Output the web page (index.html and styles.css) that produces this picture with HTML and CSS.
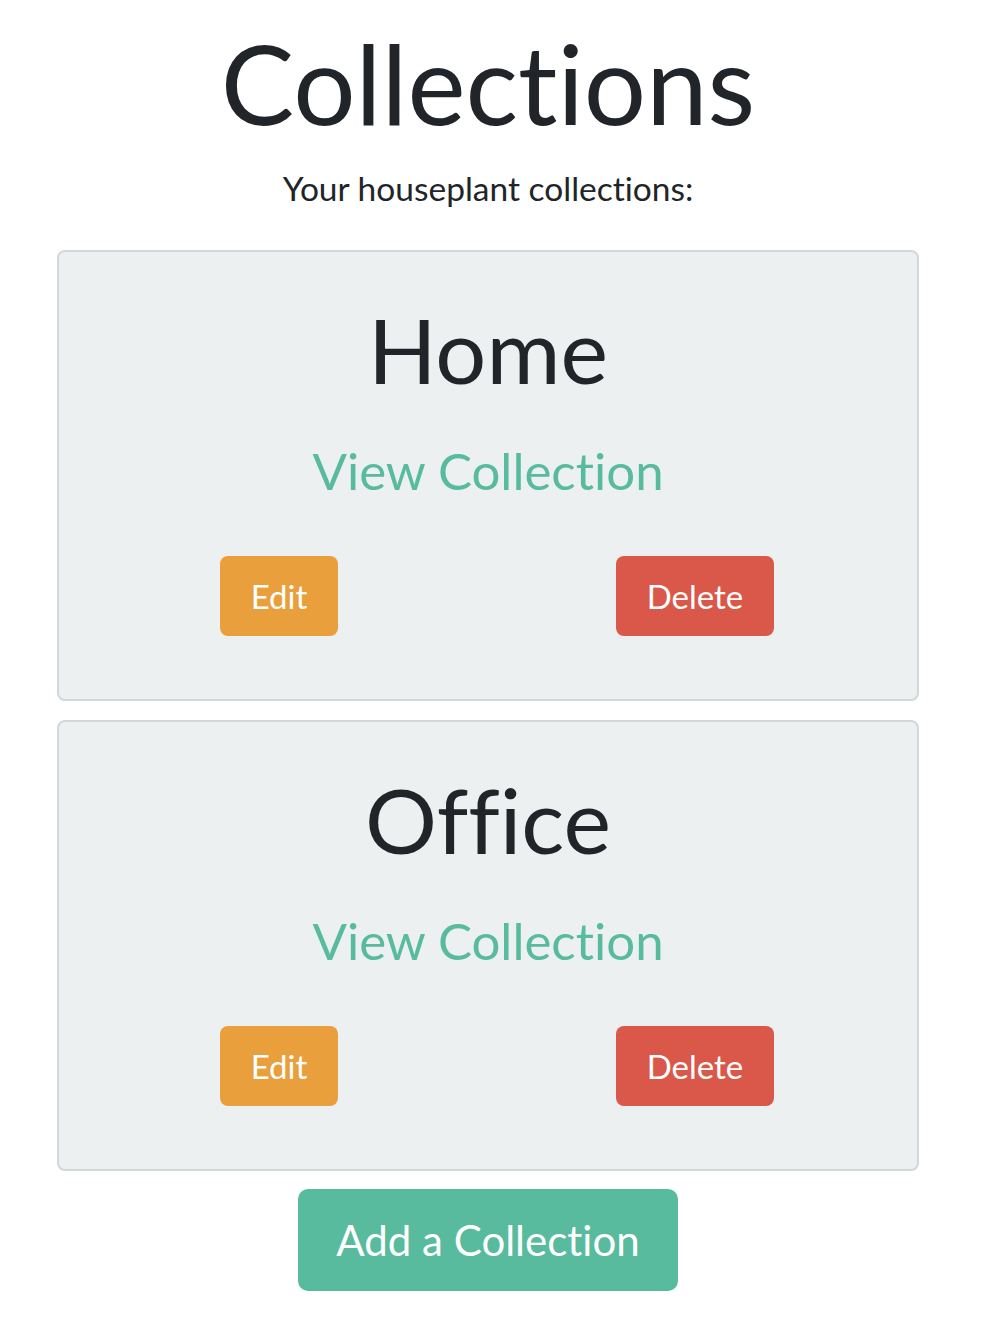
FILE: index.html
```html
<!DOCTYPE html>
<html lang="en">
<head>
<meta charset="utf-8">
<title>Collections</title>
<link rel="stylesheet" href="styles.css">
</head>
<body>
<main class="page">
  <h1 class="title">Collections</h1>
  <p class="subtitle">Your houseplant collections:</p>

  <section class="card">
    <h2 class="card-title">Home</h2>
    <a class="card-link" href="#">View Collection</a>
    <div class="actions">
      <a class="btn btn-edit" href="#">Edit</a>
      <a class="btn btn-delete" href="#">Delete</a>
    </div>
  </section>

  <section class="card">
    <h2 class="card-title">Office</h2>
    <a class="card-link" href="#">View Collection</a>
    <div class="actions">
      <a class="btn btn-edit" href="#">Edit</a>
      <a class="btn btn-delete" href="#">Delete</a>
    </div>
  </section>

  <div class="add-row">
    <a class="btn btn-add" href="#">Add a Collection</a>
  </div>
</main>
</body>
</html>
```
FILE: styles.css
```css
* { box-sizing: border-box; }

body {
  margin: 0;
  background: #ffffff;
  color: #212529;
  font-family: Lato, "Open Sans", "Liberation Sans", sans-serif;
  font-variant-ligatures: none;
  font-feature-settings: "liga" 0, "clig" 0;
}

.page {
  width: 862px;
  margin-left: 57px;
  padding-top: 16px;
  display: flex;
  flex-direction: column;
  align-items: stretch;
  text-align: center;
}

.title {
  margin: 0 0 16px;
  font-size: 110px;
  font-weight: 400;
  line-height: 1.2;
}

.subtitle {
  margin: 0 0 38px;
  font-size: 33.5px;
  line-height: 48px;
}

.card {
  background: #ecf0f1;
  border: 2px solid #d2d7d9;
  border-radius: 8px;
  padding: 42px 0 63px;
  margin-bottom: 19px;
  display: flex;
  flex-direction: column;
  align-items: center;
}

.card-title {
  margin: 0 0 28px;
  font-size: 90px;
  font-weight: 400;
  line-height: 110px;
}

.card-link {
  font-size: 51px;
  line-height: 78px;
  color: #59bb9e;
  text-decoration: none;
  margin-bottom: 46px;
}

.actions {
  align-self: stretch;
  padding: 0 14px 0 12px;
  display: grid;
  grid-template-columns: 1fr 1fr;
  justify-items: center;
}

.btn {
  display: inline-flex;
  align-items: center;
  justify-content: center;
  color: #ffffff;
  text-decoration: none;
  border-radius: 8px;
}

.btn-edit,
.btn-delete {
  height: 80px;
  padding: 0 31px;
  font-size: 33px;
}

.btn-edit { background: #e9a03c; }
.btn-delete { background: #d9584a; }

.add-row {
  display: flex;
  justify-content: center;
  margin-top: -1px;
}

.btn-add {
  height: 102px;
  padding: 0 38px;
  font-size: 42px;
  background: #59bb9e;
  border-radius: 10px;
}
```
